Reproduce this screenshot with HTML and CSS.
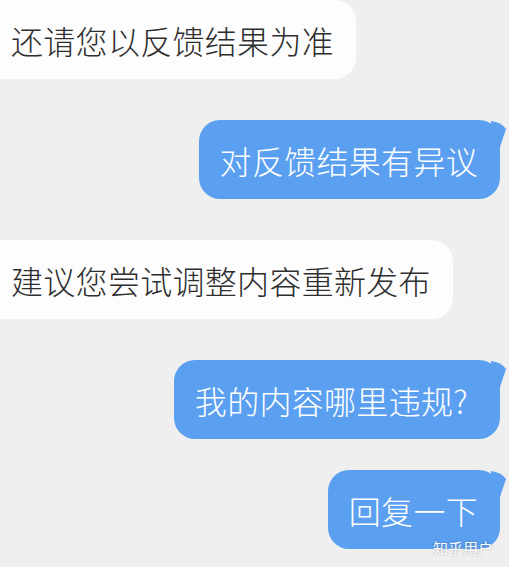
FILE: index.html
```html
<!DOCTYPE html>
<html>

<head>
  <meta charset="utf-8">
  <title>聊天记录</title>
  <link rel="stylesheet" href="styles.css">
</head>

<body>

  <div class="chat">
    <div class="ligne gauche">
      <div class="bulle">还请您以反馈结果为准</div>
    </div>
    <div class="ligne droite">
      <div class="bulle">对反馈结果有异议</div>
    </div>
    <div class="ligne gauche">
      <div class="bulle">建议您尝试调整内容重新发布</div>
    </div>
    <div class="ligne droite">
      <div class="bulle question">我的内容哪里违规?</div>
    </div>
    <div class="ligne droite derniere">
      <div class="bulle">回复一下</div>
    </div>
  </div>

  <div class="filigrane">知乎用户</div>

</body>

</html>
```

FILE: styles.css
```css
body {
  margin: 0;
  height: 567px;
  overflow: hidden;
  background: #efefef;
  font-family: "Noto Sans CJK SC", "Noto Sans", sans-serif;
  position: relative;
}

.chat {
  display: flex;
  flex-direction: column;
  gap: 41px;
}

.ligne {
  display: flex;
}

.gauche {
  justify-content: flex-start;
}

.droite {
  justify-content: flex-end;
  padding-right: 9px;
}

.derniere {
  margin-top: -10px;
}

.bulle {
  position: relative; /* pour la petite pointe */
  height: 79px;
  box-sizing: border-box;
  display: flex;
  align-items: center;
  font-size: 32px;
  font-weight: 300;
  letter-spacing: 0.3px;
  line-height: 40px;
  border-radius: 21px;
  white-space: nowrap;
}

.gauche .bulle {
  background: #fdfdfd;
  color: #2e2e2e;
  margin-left: -20px;
  padding: 0 22px 0 31px;
}

.droite .bulle {
  background: #5b9ff1;
  color: #fff;
  padding: 0 22px 0 21px;
}

.droite .question {
  padding-right: 32px;
}

.droite .bulle::after {
  content: "";
  position: absolute;
  right: -7px;
  top: 1px;
  width: 16px;
  height: 26px;
  background: #5b9ff1;
  clip-path: path('M0 0 Q10 1 15 8 L9 26 L0 26 Z');
}

.filigrane {
  position: absolute;
  right: 16px;
  bottom: 10px;
  font-size: 15px;
  line-height: 18px;
  color: #fff;
  text-shadow: 0 0 2px rgba(0, 0, 0, 0.35);
}
```
